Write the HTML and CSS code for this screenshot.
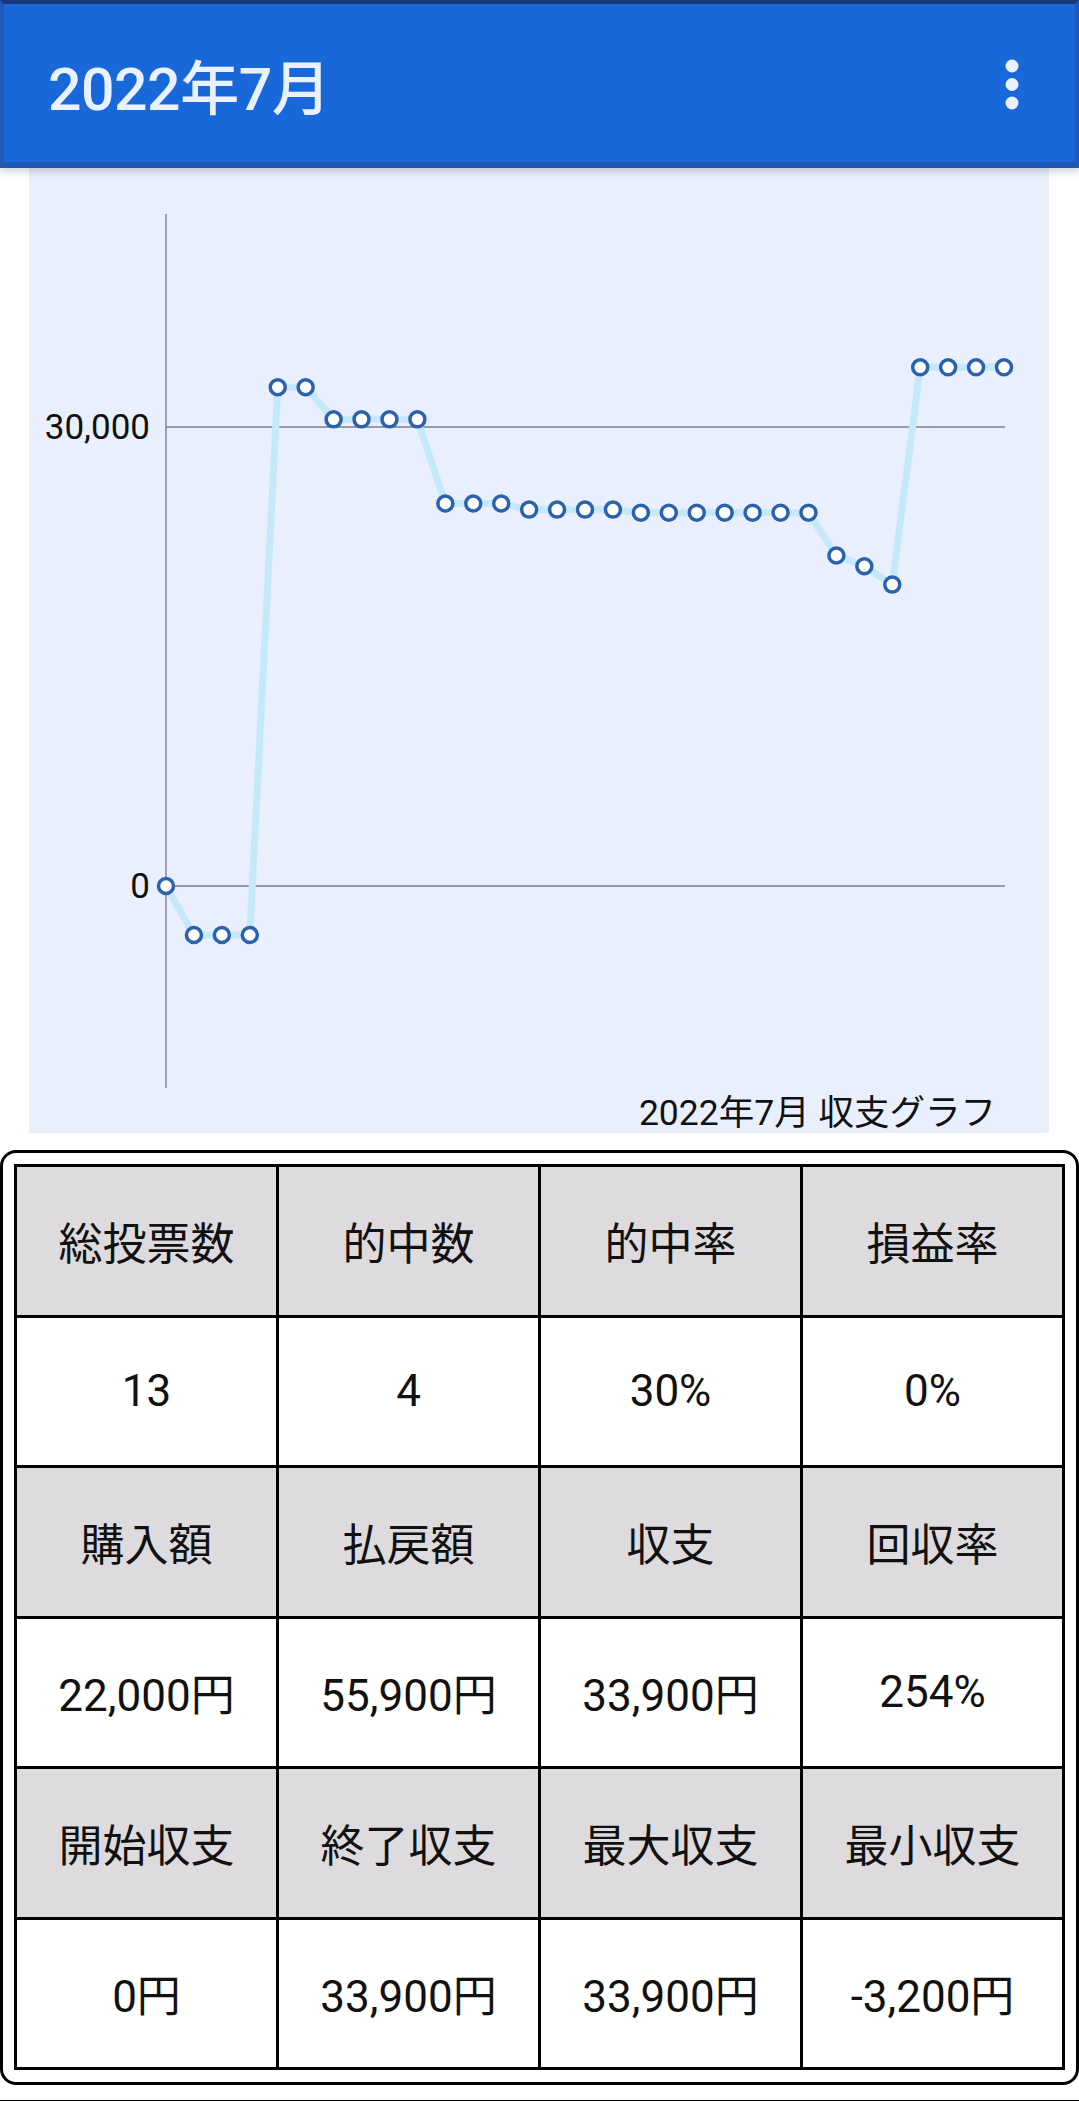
FILE: index.html
```html
<!DOCTYPE html>
<html lang="ja">
<head>
  <meta charset="utf-8">
  <meta name="viewport" content="width=device-width, initial-scale=1">
  <title>2022年7月</title>
  <link rel="stylesheet" href="styles.css">
</head>
<body>
  <header class="app-bar">
    <h1 class="app-title">2022年7月</h1>
    <button class="menu-btn" type="button" aria-label="menu">
      <svg width="24" height="60" viewBox="0 0 24 60">
        <circle cx="12" cy="11" r="6.5" fill="#e9f1ff"/>
        <circle cx="12" cy="29.5" r="6.5" fill="#e9f1ff"/>
        <circle cx="12" cy="48" r="6.5" fill="#e9f1ff"/>
      </svg>
    </button>
  </header>

  <main>
    <section class="chart-panel">
      <svg id="chart" width="1020" height="925" viewBox="0 0 1020 925"></svg>
      <p class="chart-caption">2022年7月 収支グラフ</p>
    </section>

    <div class="stats-card">
      <table class="stats-table">
        <tr class="head-row"><td>総投票数</td><td>的中数</td><td>的中率</td><td>損益率</td></tr>
        <tr><td>13</td><td>4</td><td>30%</td><td>0%</td></tr>
        <tr class="head-row"><td>購入額</td><td>払戻額</td><td>収支</td><td>回収率</td></tr>
        <tr><td>22,000円</td><td>55,900円</td><td>33,900円</td><td>254%</td></tr>
        <tr class="head-row"><td>開始収支</td><td>終了収支</td><td>最大収支</td><td>最小収支</td></tr>
        <tr><td>0円</td><td>33,900円</td><td>33,900円</td><td>-3,200円</td></tr>
      </table>
    </div>

    <div class="next-card"></div>
  </main>

  <script type="text/javascript">
    // daily balance for July (yen)
    const balances = [
      0, -3200, -3200, -3200, 32600, 32600, 30500, 30500, 30500, 30500,
      25000, 25000, 25000, 24600, 24600, 24600, 24600, 24400, 24400, 24400,
      24400, 24400, 24400, 24400, 21600, 20900, 19700, 33900, 33900, 33900, 33900
    ];

    const svgNS = 'http://www.w3.org/2000/svg';
    const chart = document.querySelector('#chart');

    const left = 137;
    const right = 975;
    const zeroY = 718;
    const pxPerYen = 459 / 30000;
    const step = (right - left) / (balances.length - 1);

    function el(name, attrs, text) {
      const node = document.createElementNS(svgNS, name);
      for (const k in attrs) node.setAttribute(k, attrs[k]);
      if (text) node.textContent = text;
      chart.appendChild(node);
      return node;
    }

    const yOf = v => zeroY - v * pxPerYen;

    // grid + axis
    el('line', { x1: left, y1: yOf(30000), x2: right + 1, y2: yOf(30000), class: 'grid' });
    el('line', { x1: left, y1: zeroY, x2: right + 1, y2: zeroY, class: 'grid' });
    el('line', { x1: left, y1: 46, x2: left, y2: 920, class: 'grid' });

    el('text', { x: 121, y: yOf(30000), class: 'axis-label' }, '30,000');
    el('text', { x: 121, y: zeroY, class: 'axis-label' }, '0');

    const pts = balances.map((v, i) => (left + i * step) + ',' + yOf(v));
    el('polyline', { points: pts.join(' '), class: 'series' });

    for (let i = 0; i < balances.length; i++) {
      el('circle', { cx: left + i * step, cy: yOf(balances[i]), r: 7.5, class: 'marker' });
    }
  </script>
</body>
</html>
```

FILE: styles.css
```css
* {
  margin: 0;
  padding: 0;
  box-sizing: border-box;
}

body {
  background-color: #fff;
  font-family: "Roboto", "Noto Sans CJK JP", sans-serif;
  color: #111;
  width: 1079px;
}

.app-bar {
  position: relative;
  z-index: 2;
  height: 168px;
  background-color: #1868d9;
  border: 4px solid #2259b4;
  border-top: 4px solid #17397a;
  border-bottom: 6px solid #1e58b2;
  box-shadow: 0 3px 8px rgba(30, 50, 90, 0.25);
  display: flex;
  align-items: center;
  justify-content: space-between;
}
.app-title {
  font-size: 59px;
  font-weight: 500;
  color: #e9f1ff;
  margin-left: 44px;
  margin-top: 2px;
  letter-spacing: -0.5px;
}
.menu-btn {
  background: none;
  border: none;
  margin-right: 51px;
  margin-top: 4px;
  display: flex;
}

.chart-panel {
  background-color: #e9effc;
  margin: 0 30px 0 29px;
  height: 965px;
  display: flex;
  flex-direction: column;
}
#chart {
  display: block;
}
#chart .grid {
  stroke: #7b8191;
  stroke-width: 1.4;
}
#chart .series {
  fill: none;
  stroke: #c5e9fb;
  stroke-width: 7;
  stroke-linejoin: round;
}
#chart .marker {
  fill: #fff;
  stroke: #2b62ad;
  stroke-width: 3.5;
}
#chart .axis-label {
  font-family: "Roboto", sans-serif;
  font-size: 35px;
  fill: #111;
  text-anchor: end;
  dominant-baseline: central;
}
.chart-caption {
  font-size: 35.5px;
  line-height: 40px;
  height: 40px;
  text-align: right;
  padding-right: 53px;
  white-space: nowrap;
}

.stats-card {
  margin-top: 17px;
  border: 3px solid #000;
  border-radius: 16px;
  padding: 11px 11px 12px 11px;
}
.stats-table {
  width: 100%;
  border-collapse: collapse;
  table-layout: fixed;
  border: 3px solid #000;
}
.stats-table td {
  border: 3px solid #000;
  height: 150.5px;
  text-align: center;
  vertical-align: middle;
  font-size: 44px;
  background-color: #fff;
}
.stats-table .head-row td {
  background-color: #dddbde;
}

.next-card {
  margin-top: 15px;
  border-top: 3px solid #000;
  height: 20px;
}
```
